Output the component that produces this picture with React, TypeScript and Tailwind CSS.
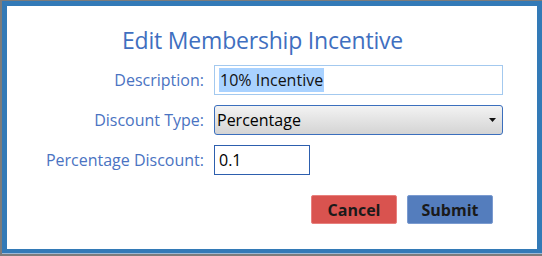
import React from "react";

const font = { fontFamily: '"Open Sans", "Noto Sans", sans-serif' };

export default function App() {
  return (
    <div className="w-[542px] h-[256px] bg-[#7c7c7c] pt-px pl-[2px] overflow-hidden" style={font}>
      <div className="w-[540px] h-[253px] bg-[#337ab7] pt-[5px] pl-[5px] pr-[5px] pb-[4px] border-b border-[#9db9d6]">
        <div className="w-[530px] h-[243px] bg-white flex flex-col">
          <div className="h-[59px] pt-[19px] pl-[115px] text-[23px] leading-[30px] text-[#3f6fc0] tracking-[-0.2px]">
            Edit Membership Incentive
          </div>
          <div className="grid grid-cols-[197px_289px] gap-x-[10px] gap-y-[10px]">
            <label className="text-right text-[16px] leading-[30px] text-[#4a73c2]">Description:</label>
            <div className="h-[30px] border border-[#a3c9ef] flex items-center pl-[4px]">
              <span className="bg-[#a9d2ff] text-[16px] leading-[24px] text-[#111] px-[1px]">10% Incentive</span>
            </div>
            <label className="text-right text-[16px] leading-[30px] text-[#4a73c2]">Discount Type:</label>
            <div className="h-[30px] border border-[#3b6fbd] rounded-[3px] bg-gradient-to-b from-[#f3f3f3] to-[#d4d4d4] flex items-center justify-between pl-[2px] pr-[6px]">
              <span className="text-[16px] text-black">Percentage</span>
              <svg width="7" height="4" viewBox="0 0 7 4"><path d="M0 0h7L3.5 4z" fill="#111" /></svg>
            </div>
            <label className="text-right text-[16px] leading-[30px] text-[#4a73c2]">Percentage Discount:</label>
            <div className="w-[96px] h-[30px] border border-[#2d5fae] flex items-center pl-[4px]">
              <span className="text-[16px] text-black">0.1</span>
            </div>
          </div>
          <div className="flex gap-[10px] pl-[304px] pt-[20px]">
            <button className="w-[86px] h-[29px] bg-[#d9534f] border border-[#e8807d] rounded-[2px] text-[16px] font-bold text-[#1a1a1a]">Cancel</button>
            <button className="w-[86px] h-[29px] bg-[#547dbd] border border-[#7b9bd0] rounded-[2px] text-[16px] font-bold text-[#1a1a1a]">Submit</button>
          </div>
        </div>
      </div>
    </div>
  );
}
